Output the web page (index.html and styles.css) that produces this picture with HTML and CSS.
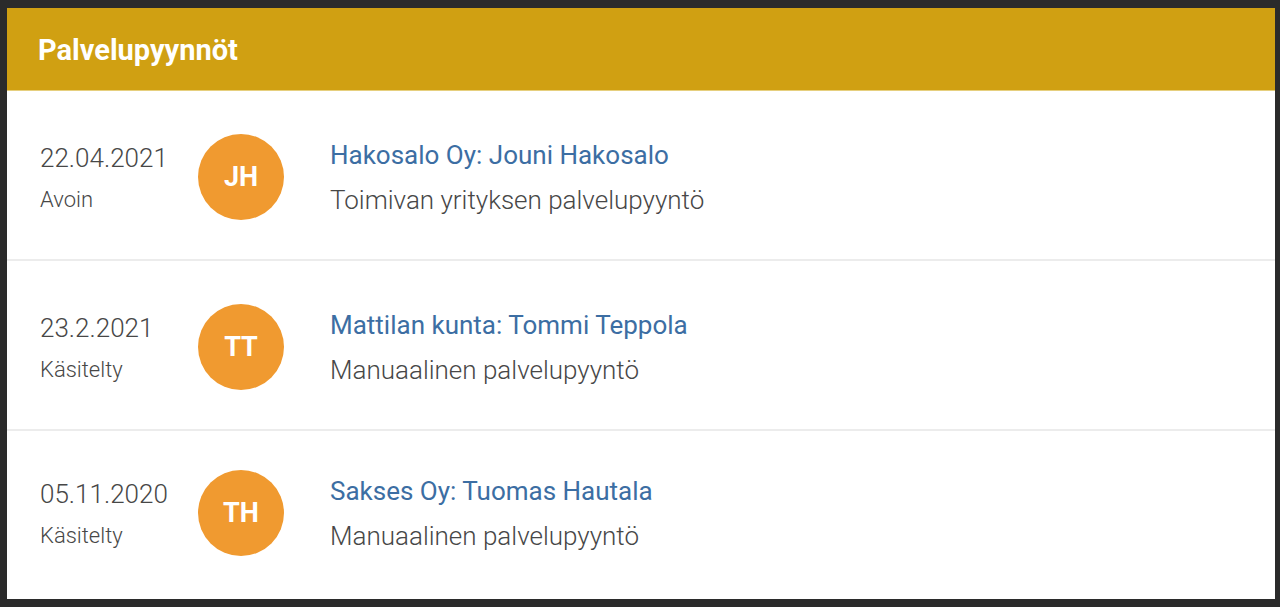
FILE: index.html
```html
<!DOCTYPE html>
<html lang="fi">
  <head>
    <meta charset="UTF-8" />
    <meta name="viewport" content="width=device-width, initial-scale=1.0" />
    <title>Palvelupyynnöt</title>
    <link rel="stylesheet" href="styles.css">
  </head>
  <body>
    <div class="card">
      <div class="card-header">
        <h1>Palvelupyynnöt</h1>
      </div>
      <ul class="request-list">
        <li class="request">
          <div class="request-meta">
            <div class="request-date">22.04.2021</div>
            <div class="request-status">Avoin</div>
          </div>
          <div class="avatar">JH</div>
          <div class="request-info">
            <a class="request-title" href="#">Hakosalo Oy: Jouni Hakosalo</a>
            <div class="request-type">Toimivan yrityksen palvelupyyntö</div>
          </div>
        </li>
        <li class="request">
          <div class="request-meta">
            <div class="request-date">23.2.2021</div>
            <div class="request-status">Käsitelty</div>
          </div>
          <div class="avatar">TT</div>
          <div class="request-info">
            <a class="request-title" href="#">Mattilan kunta: Tommi Teppola</a>
            <div class="request-type">Manuaalinen palvelupyyntö</div>
          </div>
        </li>
        <li class="request">
          <div class="request-meta">
            <div class="request-date">05.11.2020</div>
            <div class="request-status">Käsitelty</div>
          </div>
          <div class="avatar">TH</div>
          <div class="request-info">
            <a class="request-title" href="#">Sakses Oy: Tuomas Hautala</a>
            <div class="request-type">Manuaalinen palvelupyyntö</div>
          </div>
        </li>
      </ul>
    </div>
  </body>
</html>
```

FILE: styles.css
```css
body {
  font-family: Roboto, "Noto Sans", sans-serif;
  background-color: #2b2b2b;
  margin: 0;
  padding: 8px 5px 8px 7px;
}
.card {
  background: #fff;
  height: 591px;
  overflow: hidden;
}
.card-header {
  background: #d0a012;
  height: 82px;
  border-bottom: 1px solid #e6cf7e;
  display: flex;
  align-items: center;
  padding-left: 31px;
}
.card-header h1 {
  margin: 0;
  color: #fff;
  font-size: 29px;
  font-weight: 700;
  line-height: 34px;
  padding-top: 2px;
}
.request-list {
  list-style: none;
  margin: 0;
  padding: 0;
}
.request {
  display: flex;
  align-items: center;
  height: 168px;
  border-bottom: 2px solid #ececec;
  padding-left: 33px;
}
.request:last-child {
  border-bottom: none;
  height: 160px;
}
.request-meta {
  width: 158px;
  color: #474747;
  margin-top: 6px;
}
.request-date {
  font-size: 26px;
  font-weight: 300;
  line-height: 30px;
  margin-bottom: 14px;
}
.request-status {
  font-size: 22px;
  font-weight: 300;
  line-height: 26px;
}
.avatar {
  width: 86px;
  height: 86px;
  border-radius: 50%;
  background: #f09a30;
  color: #fff;
  font-size: 27px;
  font-weight: 700;
  display: flex;
  align-items: center;
  justify-content: center;
  margin-right: 46px;
  margin-top: 4px;
}
.request-info {
  display: flex;
  flex-direction: column;
  gap: 15px;
  margin-top: 4px;
}
.request-title {
  color: #3c6ea3;
  font-size: 26px;
  line-height: 30px;
  text-decoration: none;
}
.request-type {
  color: #474747;
  font-size: 26px;
  font-weight: 300;
  line-height: 30px;
}
```
